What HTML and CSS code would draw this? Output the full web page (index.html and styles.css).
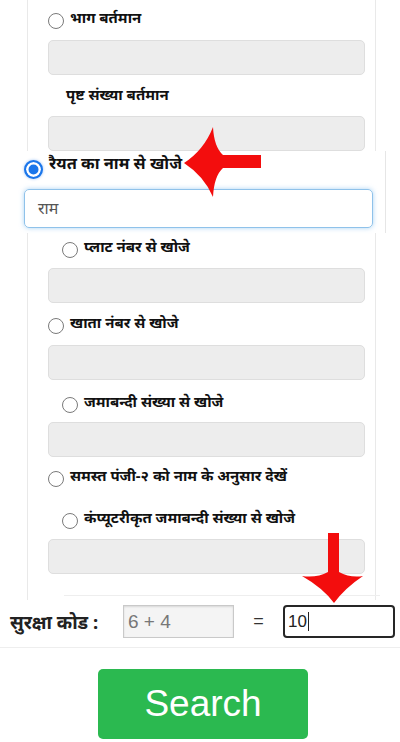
FILE: index.html
```html
<!DOCTYPE html>
<html lang="hi">
<head>
<meta charset="utf-8">
<title>खोजे</title>
<link rel="stylesheet" href="styles.css">
</head>
<body>
<div class="panel">
  <div class="opt ind-a r1"><input type="radio" class="radio" name="s"><span class="lbl">भाग बर्तमान</span></div>
  <div class="field f1"></div>
  <div class="plain">पृष्ट संख्या बर्तमान</div>
  <div class="field f2"></div>

  <div class="focus">
    <div class="opt-big"><input type="radio" class="radio checked" name="s" checked><span class="lbl-big">रैयत का नाम से खोजे</span></div>
    <div class="active-input">राम</div>
  </div>

  <div class="opt ind-b r3"><input type="radio" class="radio" name="s"><span class="lbl">प्लाट नंबर से खोजे</span></div>
  <div class="field f3"></div>
  <div class="opt ind-a r4"><input type="radio" class="radio" name="s"><span class="lbl">खाता नंबर से खोजे</span></div>
  <div class="field f4"></div>
  <div class="opt ind-b r5"><input type="radio" class="radio" name="s"><span class="lbl">जमाबन्दी संख्या से खोजे</span></div>
  <div class="field f5"></div>
  <div class="opt ind-a r6"><input type="radio" class="radio" name="s"><span class="lbl">समस्त पंजी-२ को नाम के अनुसार देखें</span></div>
  <div class="opt ind-b r7"><input type="radio" class="radio" name="s"><span class="lbl">कंप्यूटरीकृत जमाबन्दी संख्या से खोजे</span></div>
  <div class="field f6"></div>
  <div class="divider"></div>
</div>

<div class="captcha">
  <div class="captcha-row">
    <span class="cap-label">सुरक्षा कोड :</span>
    <span class="cap-q">6 + 4</span>
    <span class="cap-eq">=</span>
    <span class="cap-a">10<span class="caret"></span></span>
  </div>
</div>

<div class="btn">Search</div>

<svg class="arrow arrow-left" width="90" height="80" viewBox="180 122 90 80" aria-hidden="true">
  <path d="M184,163 Q204,150 213,127 Q214,147 223,155 L261,155 L261,168 L223,168 Q214,176 213,197 Q204,176 184,163 Z" fill="#f30d0d"/>
</svg>
<svg class="arrow arrow-down" width="70" height="75" viewBox="298 530 70 75" aria-hidden="true">
  <path d="M328,533 L339,533 L339,572 Q350,578 363,576 Q345,588 334,603 Q323,588 302,576 Q317,578 328,572 Z" fill="#f30d0d"/>
</svg>
</body>
</html>
```
FILE: styles.css
```css
html, body {
  margin: 0;
  padding: 0;
  background: #fff;
}
body {
  position: relative;
  width: 400px;
  height: 742px;
  overflow: hidden;
  font-family: "Noto Sans", "Liberation Sans", sans-serif;
  color: #111;
}
.panel {
  margin-left: 27px;
  width: 347px;
  border-left: 1px solid #e9e9e9;
  border-right: 1px solid #e9e9e9;
  padding-top: 8px;
  padding-bottom: 4px;
  display: flex;
  flex-direction: column;
  align-items: flex-start;
}
.opt {
  display: flex;
  align-items: flex-start;
  height: 22px;
  white-space: nowrap;
}
.ind-a { padding-left: 20px; }
.ind-b { padding-left: 34px; }
.radio {
  appearance: none;
  -webkit-appearance: none;
  margin: 5px 6px 0 0;
  width: 16px;
  height: 16px;
  border: 1px solid #7a7a7a;
  border-radius: 50%;
  background: #fff;
  flex: none;
}
.lbl {
  font-size: 15px;
  font-weight: 700;
  line-height: 19px;
}
.field {
  margin-left: 20px;
  width: 317px;
  height: 35px;
  box-sizing: border-box;
  background: #ededed;
  border: 1px solid #dedede;
  border-radius: 5px;
}
.f1 { margin-top: 10px; }
.plain {
  margin-top: 10px;
  padding-left: 38px;
  height: 22px;
  font-size: 15px;
  font-weight: 700;
  line-height: 19px;
}
.f2 { margin-top: 9px; }
.focus {
  margin-left: -28px;
  width: 386px;
  height: 82px;
  box-sizing: border-box;
  border-right: 1px solid #e6e6e6;
  background: #fff;
  padding-top: 1px;
}
.opt-big {
  display: flex;
  align-items: flex-start;
  height: 28px;
  padding-left: 24px;
}
.radio.checked {
  margin: 8px 6px 0 0;
  width: 19px;
  height: 19px;
  border: 2px solid #1b76ea;
  background: #1b76ea;
  box-shadow: inset 0 0 0 2.5px #fff, 0 0 3px rgba(27, 118, 234, 0.45);
}
.lbl-big {
  font-size: 16.4px;
  font-weight: 700;
  line-height: 22px;
}
.active-input {
  margin: 9px 0 0 24px;
  width: 349px;
  height: 39px;
  box-sizing: border-box;
  border: 1px solid #8fc2ea;
  border-radius: 5px;
  box-shadow: 0 0 5px rgba(102, 175, 233, 0.55);
  padding-left: 13px;
  font-size: 16px;
  line-height: 36px;
  color: #555;
}
.r3 { margin-top: 4px; }
.f3 { margin-top: 9px; }
.r4 { margin-top: 10px; }
.f4 { margin-top: 10px; }
.r5 { margin-top: 12px; }
.f5 { margin-top: 8px; }
.r6 { margin-top: 9px; }
.r7 { margin-top: 20px; }
.f6 { margin-top: 9px; }
.divider {
  margin-top: 21px;
  margin-left: 36px;
  width: 316px;
  height: 1px;
  background: #eeeeee;
}
.captcha {
  padding: 5px 0 9px;
  border-bottom: 1px solid #eeeeee;
}
.captcha-row {
  display: flex;
  align-items: center;
  height: 33px;
}
.cap-label {
  box-sizing: border-box;
  width: 123px;
  padding-left: 10px;
  font-size: 18.5px;
  font-weight: 700;
  color: #222;
  white-space: nowrap;
}
.cap-q {
  box-sizing: border-box;
  width: 111px;
  height: 33px;
  border: 1px solid #c9c9c9;
  background: #f4f4f4;
  box-shadow: inset 0 1px 2px rgba(0, 0, 0, 0.12);
  padding-left: 4px;
  font-family: "Liberation Sans", sans-serif;
  font-size: 19px;
  line-height: 31px;
  color: #777;
}
.cap-eq {
  width: 49px;
  text-align: center;
  font-family: "Liberation Sans", sans-serif;
  font-size: 18px;
  color: #333;
}
.cap-a {
  box-sizing: border-box;
  width: 112px;
  height: 33px;
  border: 2px solid #262626;
  border-radius: 4px;
  padding-left: 3px;
  font-family: "Liberation Sans", sans-serif;
  font-size: 17px;
  line-height: 29px;
  color: #222;
  display: flex;
  align-items: center;
}
.caret {
  display: inline-block;
  width: 1px;
  height: 19px;
  background: #222;
  margin-left: 1px;
}
.btn {
  margin: 21px 0 0 98px;
  width: 210px;
  height: 70px;
  border-radius: 5px;
  background: #2bb950;
  color: #fff;
  font-family: "Liberation Sans", sans-serif;
  font-size: 37px;
  line-height: 70px;
  text-align: center;
}
.arrow {
  position: absolute;
}
.arrow-left { left: 180px; top: 122px; }
.arrow-down { left: 298px; top: 530px; }
```
